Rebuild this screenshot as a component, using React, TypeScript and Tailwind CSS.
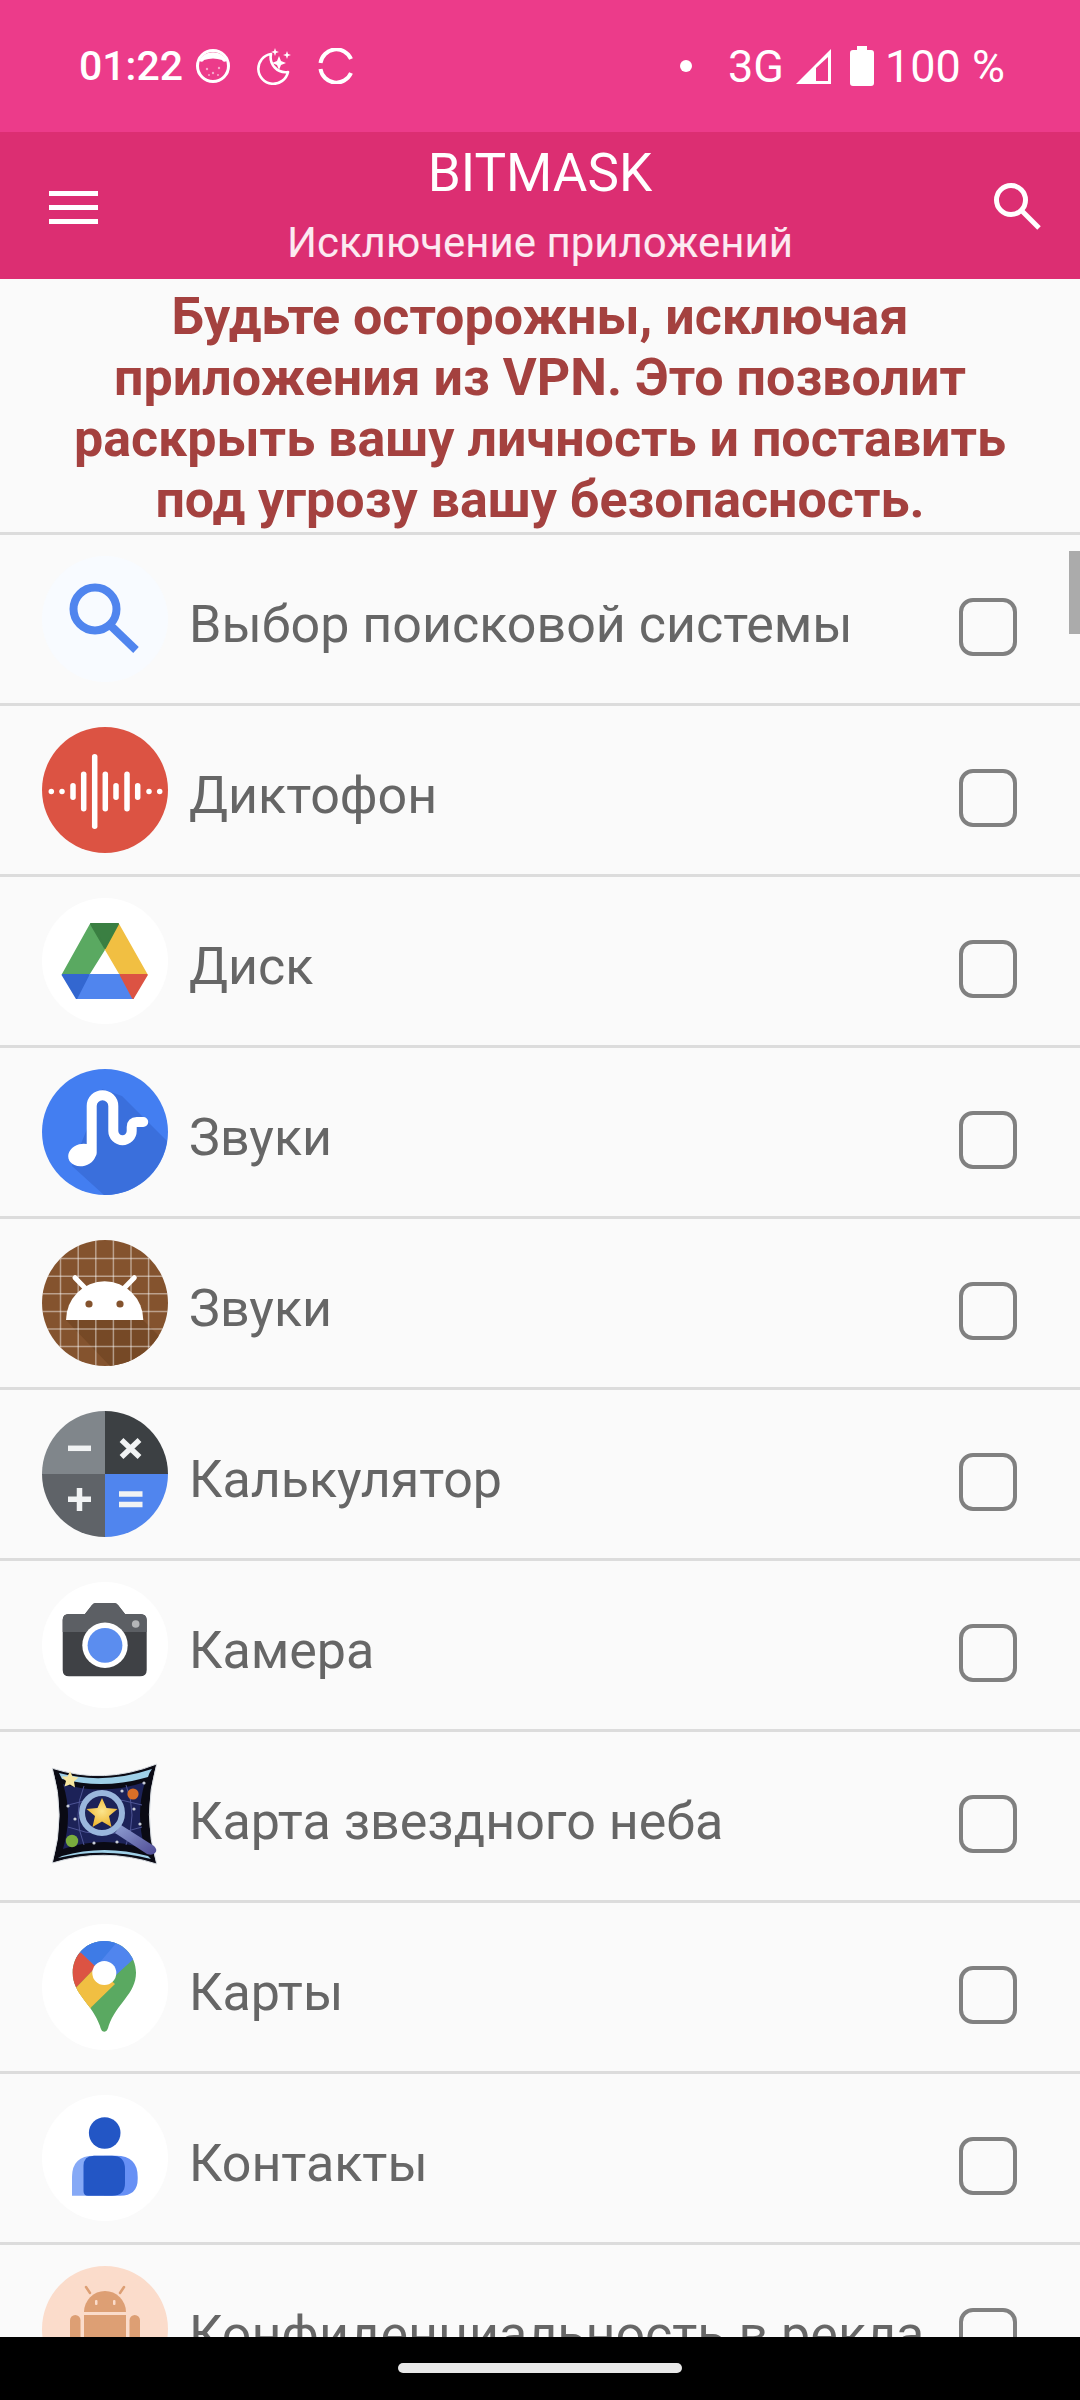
import type { ReactNode } from "react"

// All app icons share a 126x126 box, same as the launcher icons in the list
function Icon({ children }: { children: ReactNode }) {
  return (
    <svg viewBox="0 0 126 126" className="h-[126px] w-[126px] shrink-0">
      {children}
    </svg>
  )
}

function SearchEngineIcon() {
  return (
    <Icon>
      <circle cx="63" cy="63" r="63" fill="#f8fbff" />
      <circle cx="53" cy="53" r="21.5" fill="none" stroke="#5085ee" strokeWidth="8" />
      <path d="M68 69 L94 94" stroke="#5085ee" strokeWidth="8" />
    </Icon>
  )
}

function RecorderIcon() {
  const bars: [number, number][] = [
    [9.3, 5.5], [20, 5.5], [31, 17], [41.7, 40], [52.7, 75], [63.3, 40],
    [74, 17], [85, 40], [95.7, 17], [107, 5.5], [117.7, 5.5],
  ]
  return (
    <Icon>
      <circle cx="63" cy="63" r="63" fill="#dc5343" />
      {bars.map(([x, h]) => (
        <rect key={x} x={x - 2.75} y={64.5 - h / 2} width="5.5" height={h} rx="2.75" fill="#fff" />
      ))}
    </Icon>
  )
}

function DriveIcon() {
  return (
    <Icon>
      <circle cx="63" cy="63" r="63" fill="#fff" />
      <g strokeLinejoin="round" strokeWidth="2">
        <polygon points="49,26 63,50 46.3,76.7 20.7,76.7" fill="#5aa961" stroke="#5aa961" />
        <polygon points="76,26 104.7,76.7 78.7,76.7 63,50" fill="#f1bf42" stroke="#f1bf42" />
        <polygon points="49,26 76,26 63,50" fill="#3a7f42" stroke="#3a7f42" />
        <polygon points="46.3,77 78.7,77 91,100 35,100" fill="#5085ee" stroke="#5085ee" />
        <polygon points="20.7,77 46.3,77 34.5,100" fill="#3367d0" stroke="#3367d0" />
        <polygon points="78.7,77 104.7,77 91,100" fill="#dc5343" stroke="#dc5343" />
      </g>
    </Icon>
  )
}

function SoundsBlueIcon() {
  return (
    <Icon>
      <circle cx="63" cy="63" r="63" fill="#437ef1" />
      <path d="M30 97 L62 126 A63 63 0 0 0 125 72 L80 27 L60 20 L45 60 Z" fill="#3a6fdc" />
      <path
        d="M49.7 84 V37 a10.8 10.8 0 0 1 21.6 0 V62 a9.2 9.2 0 0 0 18.4 0 V58 q0 -5 5 -5 h6.5"
        fill="none"
        stroke="#fff"
        strokeWidth="10"
        strokeLinecap="round"
      />
      <ellipse cx="40" cy="86" rx="14" ry="11" fill="#fff" transform="rotate(-15 40 86)" />
    </Icon>
  )
}

function SoundsBrownIcon() {
  const lines = [18.5, 36.2, 53.8, 71.4, 89, 106.6]
  return (
    <Icon>
      <defs>
        <clipPath id="brown-clip">
          <circle cx="63" cy="63" r="63" />
        </clipPath>
      </defs>
      <g clipPath="url(#brown-clip)">
        <rect width="126" height="126" fill="#84532e" />
        <polygon points="24,80 101,80 126,105 126,126 68,126" fill="#764926" />
        {lines.map((p) => (
          <g key={p} stroke="#fff" strokeOpacity="0.45" strokeWidth="1.5">
            <line x1={p} y1="0" x2={p} y2="126" />
            <line x1="0" y1={p} x2="126" y2={p} />
          </g>
        ))}
      </g>
      <path d="M24 80 A38.6 38.6 0 0 1 101.3 80 Z" fill="#fff" />
      <path d="M33 37.7 L44 49 M92.3 37.7 L81.3 49" stroke="#fff" strokeWidth="5" strokeLinecap="round" />
      <circle cx="47" cy="64" r="3.6" fill="#84532e" />
      <circle cx="78" cy="64" r="3.6" fill="#84532e" />
    </Icon>
  )
}

function CalculatorIcon() {
  return (
    <Icon>
      <path d="M63 63 V0 A63 63 0 0 0 0 63 Z" fill="#80868b" />
      <path d="M63 63 V0 A63 63 0 0 1 126 63 Z" fill="#3c4043" />
      <path d="M63 63 H0 A63 63 0 0 0 63 126 Z" fill="#5f6368" />
      <path d="M63 63 H126 A63 63 0 0 1 63 126 Z" fill="#5085ee" />
      <g stroke="#f1f3f4" strokeWidth="5.5">
        <path d="M26 37.3 H49" />
        <path d="M26 88.3 H49 M37.5 77 V100" />
        <path d="M79.5 29 L97.5 46 M97.5 29 L79.5 46" />
        <path d="M77 83 H100.5 M77 93.5 H100.5" />
      </g>
    </Icon>
  )
}

function CameraIcon() {
  return (
    <Icon>
      <circle cx="63" cy="63" r="63" fill="#fff" />
      <path d="M43 32 L50 23 Q51.5 21 54 21 H72 Q74.5 21 76 23 L83 32 H98 Q104.7 32 104.7 38 V88 Q104.7 94.3 98 94.3 H27 Q20.7 94.3 20.7 88 V38 Q20.7 32 27 32 Z" fill="#3f4145" />
      <path d="M43 32 L50 23 Q51.5 21 54 21 H72 Q74.5 21 76 23 L83 32 H98 Q104.7 32 104.7 38 V50 H20.7 V38 Q20.7 32 27 32 Z" fill="#5c5f64" />
      <circle cx="63" cy="63.3" r="22.7" fill="#fff" />
      <circle cx="63" cy="63.3" r="17.4" fill="#5b8def" />
      <circle cx="93.7" cy="42" r="3.8" fill="#b4b6b8" />
    </Icon>
  )
}

function SkyMapIcon() {
  return (
    <Icon>
      <defs>
        <radialGradient id="sky-star" cx="50%" cy="45%" r="55%">
          <stop offset="0%" stopColor="#fbe58e" />
          <stop offset="100%" stopColor="#eeb52f" />
        </radialGradient>
        <linearGradient id="sky-handle" x1="0" y1="0" x2="1" y2="1">
          <stop offset="0%" stopColor="#8f9fd2" />
          <stop offset="100%" stopColor="#4e4a94" />
        </linearGradient>
      </defs>
      <path d="M10.3 15.3 Q62 32 114.7 11 Q100 62 114.7 111 Q62 94 10.3 110 Q24 62 10.3 15.3 Z" fill="#0a0a14" stroke="#d8dde2" strokeWidth="1" />
      <path d="M17 20 Q62 32 110 16 Q107 20 106 24 Q62 37 20 26 Z" fill="#9fd0e8" />
      <path d="M20 103 Q62 91 106 103 L109 106 Q62 94 16 105 Z" fill="#9fd0e8" />
      <path d="M21 31 Q62 43 103 29 Q93 62 103 96 Q62 82 21 96 Q31 62 21 31 Z" fill="#1c2258" />
      <g fill="none" stroke="#4e5596" strokeWidth="1">
        <path d="M26 52 Q62 40 100 52" />
        <path d="M26 74 Q62 88 100 74" />
        <path d="M42 33 Q30 62 42 92" />
        <path d="M84 32 Q96 62 84 92" />
      </g>
      <g fill="#c8cdd8">
        <circle cx="26" cy="53" r="1.6" />
        <circle cx="33" cy="66" r="1.6" />
        <circle cx="102" cy="30" r="1.6" />
        <circle cx="80" cy="38" r="1.6" />
        <circle cx="92" cy="56" r="1.6" />
        <circle cx="98" cy="71" r="1.6" />
        <circle cx="52" cy="90" r="1.6" />
        <circle cx="75" cy="89" r="1.6" />
      </g>
      <circle cx="91" cy="41" r="5.6" fill="#d96f27" />
      <circle cx="30" cy="88" r="6.2" fill="#79ac3d" />
      <path d="M79 72 L112 93 Q116 97 113 100 Q110 103 105 101 L73 80 Z" fill="url(#sky-handle)" />
      <circle cx="60" cy="60" r="20" fill="#1c2258" stroke="#9ab6dc" strokeWidth="6" />
      <polygon points="60,45 64.5,55 75.5,56 67,63 69.5,74 60,68.5 50.5,74 53,63 44.5,56 55.5,55" fill="url(#sky-star)" />
      <polygon points="28,18 30.5,23.5 36.5,24.5 32,28.5 33,34.5 28,31.5 22.5,33.5 24,28 19.5,23.5 25.5,23.5" fill="#f6e6a0" />
    </Icon>
  )
}

function MapsIcon() {
  return (
    <Icon>
      <defs>
        <clipPath id="pin-clip">
          <path d="M62.3 17 C44.7 17 30.7 31 30.7 48.7 C30.7 70 50 79 58 102 C59 106 60 107.7 62.3 107.7 C64.6 107.7 65.6 106 66.6 102 C74.6 79 94 70 94 48.7 C94 31 79.9 17 62.3 17 Z" />
        </clipPath>
      </defs>
      <circle cx="63" cy="63" r="63" fill="#fff" />
      <g clipPath="url(#pin-clip)">
        <rect x="20" y="10" width="80" height="100" fill="#5aa961" />
        <polygon points="20,0 100,0 100,26 91.3,35.3 62,62 30,30" fill="#5085ee" />
        <polygon points="62,10 20,10 39,28.7 54,43 75,18" fill="#3e7be6" />
        <polygon points="39,28.7 54,43 34,63.7 20,70 20,30" fill="#dc5343" />
        <polygon points="54,43 73,60 49.7,82.7 20,70 20,66 34,63.7" fill="#f1bf42" />
        <polygon points="20,66 34,63.7 49.7,82.7 35,100 20,100" fill="#f1bf42" />
      </g>
      <circle cx="62.3" cy="49" r="12" fill="#fff" />
    </Icon>
  )
}

function ContactsIcon() {
  return (
    <Icon>
      <circle cx="63" cy="63" r="63" fill="#fff" />
      <circle cx="62.7" cy="38" r="15.8" fill="#2356c5" />
      <path d="M30 100.7 V82 Q30 60.7 52 60.7 H62 V100.7 Z" fill="#86a9f6" />
      <path d="M62 60.7 H74 Q95.7 60.7 95.7 82 V84 Q95.7 100.7 78 100.7 H62 Z" fill="#6790f5" />
      <path d="M41.5 71 Q41.5 60.7 52 60.7 H70 Q83 60.7 83 74 V88 Q83 100.7 70 100.7 H46 Q41.5 100.7 41.5 96 Z" fill="#2356c5" />
    </Icon>
  )
}

function PrivacyIcon() {
  return (
    <Icon>
      <circle cx="63" cy="63" r="63" fill="#fbdccb" />
      <g fill="#dd9f74">
        <path d="M42 46 A21 21 0 0 1 84 46 Z" />
        <path d="M48 27 L44 21 M78 27 L82 21" stroke="#dd9f74" strokeWidth="2.5" strokeLinecap="round" />
        <path d="M42 49 H84 V88 Q84 92 80 92 H46 Q42 92 42 88 Z" />
        <rect x="28" y="49" width="10.5" height="36" rx="5.25" />
        <rect x="87.5" y="49" width="10.5" height="36" rx="5.25" />
        <rect x="50" y="88" width="10" height="22" rx="5" />
        <rect x="66" y="88" width="10" height="22" rx="5" />
      </g>
      <rect x="53" y="34" width="2.5" height="5" rx="1" fill="#fbdccb" />
      <rect x="71" y="34" width="2.5" height="5" rx="1" fill="#fbdccb" />
    </Icon>
  )
}

const apps: { name: string; icon: ReactNode }[] = [
  { name: "Выбор поисковой системы", icon: <SearchEngineIcon /> },
  { name: "Диктофон", icon: <RecorderIcon /> },
  { name: "Диск", icon: <DriveIcon /> },
  { name: "Звуки", icon: <SoundsBlueIcon /> },
  { name: "Звуки", icon: <SoundsBrownIcon /> },
  { name: "Калькулятор", icon: <CalculatorIcon /> },
  { name: "Камера", icon: <CameraIcon /> },
  { name: "Карта звездного неба", icon: <SkyMapIcon /> },
  { name: "Карты", icon: <MapsIcon /> },
  { name: "Контакты", icon: <ContactsIcon /> },
  { name: "Конфиденциальность в рекламе", icon: <PrivacyIcon /> },
]

function StatusBar() {
  return (
    <div className="flex h-[132px] shrink-0 items-center bg-[#ec3b8a] pr-[75px] pl-[79px] text-[45px] leading-none text-white">
      <span className="text-[41px] font-medium">01:22</span>
      {/* cat face notification */}
      <svg viewBox="0 0 36 36" className="ml-[12px] h-[36px] w-[36px]">
        <circle cx="18" cy="18" r="15.5" fill="none" stroke="#fff" strokeWidth="3" />
        <path d="M4 13 A15.5 15.5 0 0 1 32 13 Q28 15 27 12 Q18 9 9 12 Q8 15 4 13 Z" fill="#fff" />
        <g fill="#fff" fillOpacity="0.55">
          <circle cx="12" cy="21" r="1.2" />
          <circle cx="18" cy="25" r="1.2" />
          <circle cx="24" cy="20" r="1.2" />
          <circle cx="14" cy="27" r="1" />
          <circle cx="23" cy="27" r="1" />
        </g>
      </svg>
      {/* night mode */}
      <svg viewBox="0 0 36 38" className="ml-[25px] h-[38px] w-[36px]">
        <path d="M15 7 A15 15 0 1 0 32 25 A15 15 0 0 1 15 7 Z" fill="none" stroke="#fff" strokeWidth="2.6" strokeLinejoin="round" />
        <path d="M23 9 L25 14 L30 16 L25 18 L23 23 L21 18 L16 16 L21 14 Z" fill="#fff" />
        <path d="M19 1 L20 4 L23 5 L20 6 L19 9 L18 6 L15 5 L18 4 Z" fill="#fff" />
        <path d="M31 4 L32 7 L35 8 L32 9 L31 12 L30 9 L27 8 L30 7 Z" fill="#fff" />
      </svg>
      {/* sync */}
      <svg viewBox="0 0 36 36" className="ml-[26px] h-[36px] w-[36px]">
        <path d="M2.5 15 A16 16 0 0 1 33 11" fill="none" stroke="#fff" strokeWidth="4" />
        <path d="M2.5 21 A16 16 0 0 0 33 25" fill="none" stroke="#fff" strokeWidth="4" />
      </svg>
      <span className="ml-auto h-[12px] w-[12px] rounded-full bg-white" />
      <span className="ml-[36px]">3G</span>
      <svg viewBox="0 0 37 37" className="ml-[11px] h-[37px] w-[37px]">
        <path d="M1 36 L36 1 V36 Z" fill="#fff" />
        <path d="M21 20 V33 H33 V9 Z" fill="#ec3b8a" />
      </svg>
      <svg viewBox="0 0 24 40" className="ml-[18px] h-[40px] w-[24px]">
        <path d="M7 0 H17 V4 H21 Q24 4 24 7 V37 Q24 40 21 40 H3 Q0 40 0 37 V7 Q0 4 3 4 H7 Z" fill="#fff" />
      </svg>
      <span className="ml-[11px]">100 %</span>
    </div>
  )
}

function Toolbar() {
  return (
    <div className="flex h-[147px] shrink-0 items-center bg-[#dc2e72] text-white">
      <div className="flex w-[147px] shrink-0 flex-col gap-[9px] pt-[4px] pl-[49px]">
        <div className="h-[5px] w-[49px] bg-white" />
        <div className="h-[5px] w-[49px] bg-white" />
        <div className="h-[5px] w-[49px] bg-white" />
      </div>
      <div className="flex flex-1 flex-col items-center">
        <div className="-mt-[1px] text-[53px] leading-[61px]">BITMASK</div>
        <div className="mt-[14px] text-[42px] leading-[50px] text-white/90">Исключение приложений</div>
      </div>
      <div className="flex w-[147px] shrink-0 justify-end pr-[39px]">
        <svg viewBox="0 0 48 48" className="h-[48px] w-[48px]">
          <circle cx="18" cy="18" r="14.5" fill="none" stroke="#fff" strokeWidth="5" />
          <path d="M28 28 L46 46" stroke="#fff" strokeWidth="5" />
        </svg>
      </div>
    </div>
  )
}

function AppRow({ name, icon }: { name: string; icon: ReactNode }) {
  return (
    <div className="flex h-[171px] shrink-0 items-center border-b-[3px] border-[#dcdcdc] pl-[42px]">
      {icon}
      <div className="ml-[21px] flex-1 overflow-hidden pt-[12px] text-[52px] leading-[60px] whitespace-nowrap text-[#666666]">
        {name}
      </div>
      <div className="mt-[16px] mr-[63px] ml-[35px] h-[58px] w-[58px] shrink-0 rounded-[14px] border-[4px] border-[#808080]" />
    </div>
  )
}

export default function App() {
  return (
    <div className="flex h-[2400px] w-[1080px] flex-col overflow-hidden bg-[#fafafa] font-['Roboto',sans-serif]">
      <StatusBar />
      <Toolbar />
      <div className="flex h-[256px] shrink-0 flex-col justify-center border-b-[3px] border-[#dcdcdc] px-[40px] pt-[4px] text-center text-[52px] leading-[61px] font-bold text-[#a4413f]">
        Будьте осторожны, исключая приложения из VPN. Это позволит раскрыть вашу личность и поставить под угрозу вашу безопасность.
      </div>
      <div className="relative flex flex-1 flex-col overflow-hidden">
        {apps.map((app, i) => (
          <AppRow key={i} name={app.name} icon={app.icon} />
        ))}
        <div className="absolute top-[16px] right-0 h-[83px] w-[11px] bg-[#ababab]" />
      </div>
      <div className="flex h-[63px] shrink-0 items-center justify-center bg-black pb-[1px]">
        <div className="h-[10px] w-[284px] rounded-full bg-[#e8e8e8]" />
      </div>
    </div>
  )
}
